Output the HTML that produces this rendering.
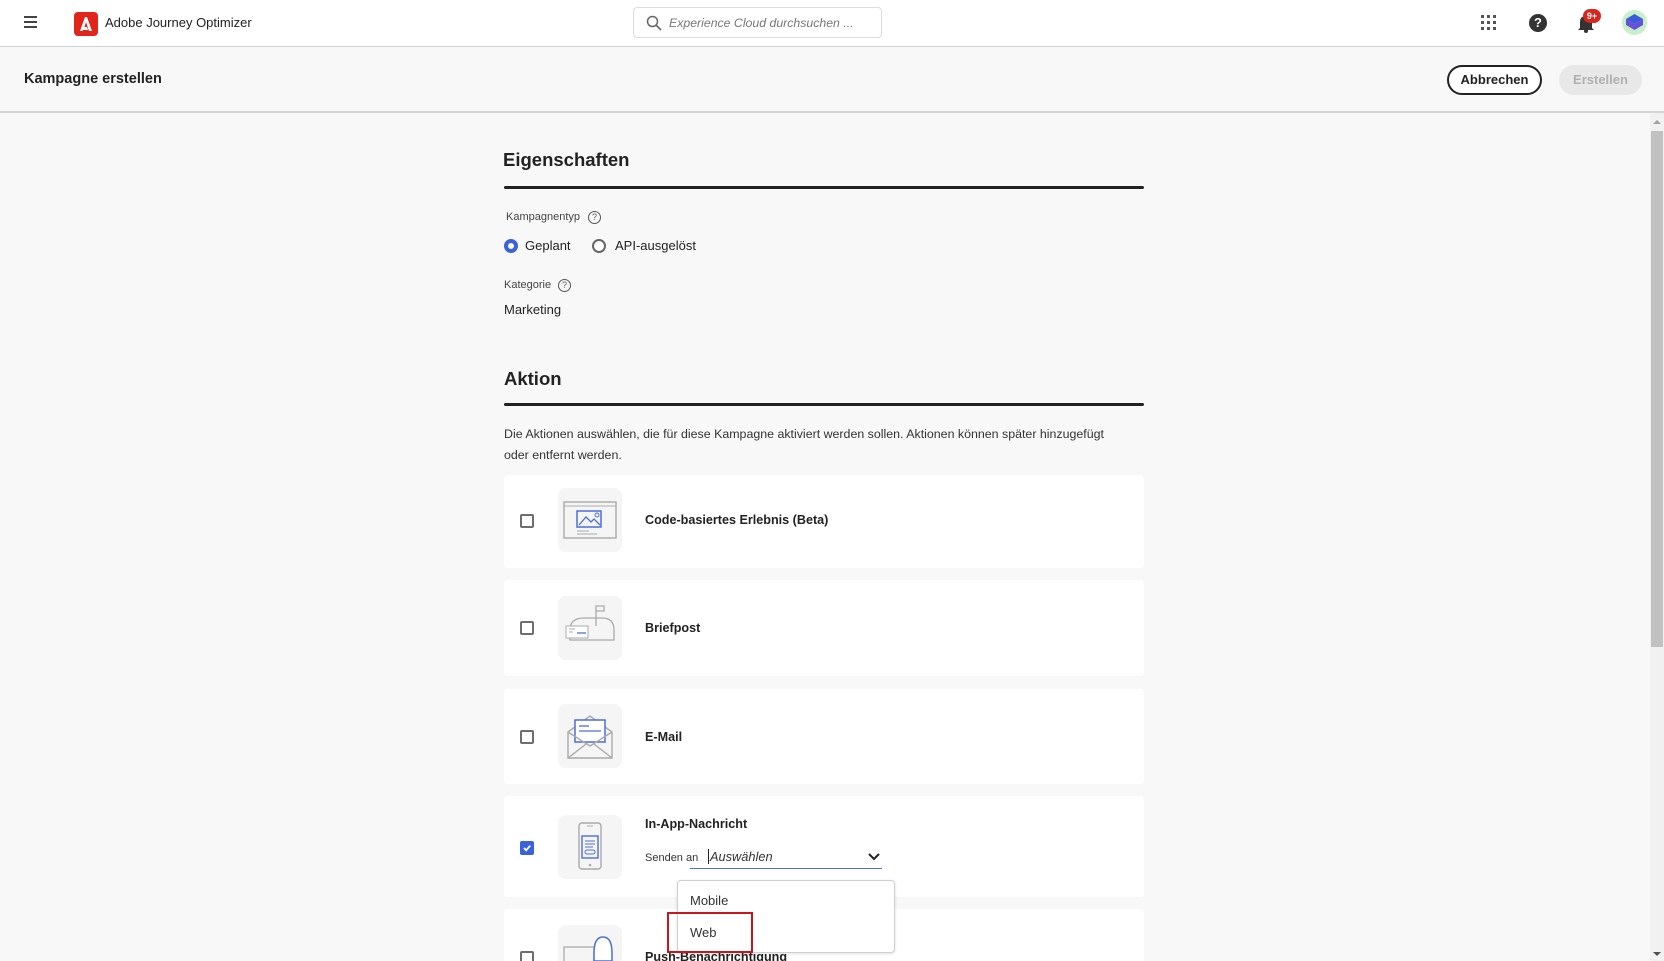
<!DOCTYPE html>
<html><head><meta charset="utf-8"><style>
*{box-sizing:border-box;margin:0;padding:0}
html{width:1664px;height:961px;overflow:hidden}
body{width:1664px;height:961px;overflow:hidden;background:#f8f8f8;font-family:"Liberation Sans",sans-serif;color:#222;position:relative}
.top{position:absolute;left:0;top:0;width:1664px;height:47px;background:#fff;border-bottom:1px solid #d0d0d0}
.sub{position:absolute;left:0;top:48px;width:1664px;height:65px;background:#f8f8f8;border-bottom:2px solid #d5d5d5}
.abs{position:absolute}
.card{position:absolute;left:504px;width:640px;background:#fff;border-radius:4px}
.ib{position:absolute;left:54px;width:64px;height:64px;background:#f5f5f5;border-radius:8px}
.cb{position:absolute;left:16px;width:14px;height:14px;border:2px solid #6e6e6e;border-radius:2px;background:#fff}
.ct{position:absolute;left:141px;font-size:12.6px;font-weight:bold;color:#222}
</style></head><body>
<div class="top">
 <div class="abs" style="left:24px;top:16px;width:13px;height:2px;background:#444;box-shadow:0 5px 0 #444,0 10px 0 #444"></div>
 <div class="abs" style="left:74px;top:12px;width:24px;height:24px;background:#e1251b;border-radius:4px"><svg width="24" height="24" viewBox="0 0 24 24"><path d="M6 19 L11 5 L13 5 L18 19 L15 19 L12 10 L10.5 15 L13 15 L14 18 L9 18 L8.7 19Z" fill="#fff"/></svg></div>
 <div class="abs" style="left:105px;top:15px;font-size:13px;color:#222">Adobe Journey Optimizer</div>
 <div class="abs" style="left:633px;top:7px;width:249px;height:31px;border:1px solid #ddd;border-radius:4px;background:#fff">
  <svg class="abs" style="left:12px;top:7px" width="16" height="16" viewBox="0 0 16 16"><circle cx="6.5" cy="6.5" r="5" fill="none" stroke="#666" stroke-width="1.5"/><path d="M10 10 L15 15" stroke="#666" stroke-width="1.6"/></svg>
  <div class="abs" style="left:35px;top:8px;font-size:12.3px;font-style:italic;color:#777">Experience Cloud durchsuchen ...</div>
 </div>
 <svg class="abs" style="left:1481px;top:15px" width="16" height="16"><g fill="#555"><rect x="0" y="0" width="3" height="3"/><rect x="6" y="0" width="3" height="3"/><rect x="12" y="0" width="3" height="3"/><rect x="0" y="6" width="3" height="3"/><rect x="6" y="6" width="3" height="3"/><rect x="12" y="6" width="3" height="3"/><rect x="0" y="12" width="3" height="3"/><rect x="6" y="12" width="3" height="3"/><rect x="12" y="12" width="3" height="3"/></g></svg>
 <div class="abs" style="left:1529px;top:14px;width:18px;height:18px;border-radius:50%;background:#333;color:#fff;font-size:13px;font-weight:bold;text-align:center;line-height:18px">?</div>
 <svg class="abs" style="left:1577px;top:13px" width="18" height="20" viewBox="0 0 18 20"><path d="M3 15 L3 9 Q3 3 9 3 Q15 3 15 9 L15 15 L17 17 L1 17 Z" fill="#333"/><circle cx="9" cy="18" r="2" fill="#333"/></svg>
 <div class="abs" style="left:1583px;top:9px;width:18px;height:14px;border-radius:7px;background:#d7261d;color:#fff;font-size:9px;font-weight:bold;text-align:center;line-height:14px">9+</div>
 <div class="abs" style="left:1622px;top:10px;width:25px;height:25px;border-radius:50%;background:#c8f0c8"><svg width="25" height="25" viewBox="0 0 25 25"><path d="M12.5 4 L21 9 L12.5 14 L4 9Z" fill="#3b5bdb"/><path d="M4 9 L4 15 L12.5 20 L21 15 L21 9 L12.5 14Z" fill="#6a4fd8"/></svg></div>
</div>
<div class="sub">
 <div class="abs" style="left:24px;top:23px;font-size:14.5px;font-weight:bold">Kampagne erstellen</div>
 <div class="abs" style="left:1447px;top:17px;width:95px;height:30px;border:2px solid #222;border-radius:15px;font-size:13px;font-weight:bold;text-align:center;line-height:26px;background:#fff">Abbrechen</div>
 <div class="abs" style="left:1559px;top:17px;width:83px;height:30px;border-radius:15px;background:#e8e8e8;font-size:13px;font-weight:bold;color:#b0b0b0;text-align:center;line-height:30px">Erstellen</div>
</div>
<div class="abs" style="left:503px;top:149px;font-size:18.5px;font-weight:bold">Eigenschaften</div>
<div class="abs" style="left:504px;top:186px;width:640px;height:3px;background:#222;border-radius:2px"></div>
<div class="abs" style="left:506px;top:211px;font-size:11px;color:#444">Kampagnentyp</div>
<div class="abs" style="left:588px;top:211px;width:13px;height:13px;border:1.3px solid #555;border-radius:50%;font-size:9px;text-align:center;line-height:11px;color:#555">?</div>
<div class="abs" style="left:504px;top:239px;width:14px;height:14px;border-radius:50%;border:4px solid #3b63d9;background:#fff"></div>
<div class="abs" style="left:525px;top:238px;font-size:13px">Geplant</div>
<div class="abs" style="left:592px;top:239px;width:14px;height:14px;border-radius:50%;border:2px solid #666;background:#fff"></div>
<div class="abs" style="left:615px;top:238px;font-size:13px">API-ausgelöst</div>
<div class="abs" style="left:504px;top:279px;font-size:11px;color:#444">Kategorie</div>
<div class="abs" style="left:558px;top:279px;width:13px;height:13px;border:1.3px solid #555;border-radius:50%;font-size:9px;text-align:center;line-height:11px;color:#555">?</div>
<div class="abs" style="left:504px;top:302px;font-size:13px">Marketing</div>
<div class="abs" style="left:504px;top:368px;font-size:18.5px;font-weight:bold">Aktion</div>
<div class="abs" style="left:504px;top:403px;width:640px;height:3px;background:#222;border-radius:2px"></div>
<div class="abs" style="left:504px;top:424px;width:622px;font-size:12.4px;line-height:21px;color:#333">Die Aktionen auswählen, die für diese Kampagne aktiviert werden sollen. Aktionen können später hinzugefügt oder entfernt werden.</div>

<div class="card" style="top:475px;height:93px">
 <div class="cb" style="top:39px"></div>
 <div class="ib" style="top:13px"><svg width="64" height="64" viewBox="0 0 64 64"><rect x="6" y="14" width="52" height="36" fill="none" stroke="#aaa" stroke-width="1.4"/><line x1="6" y1="18" x2="58" y2="18" stroke="#aaa"/><rect x="19" y="23" width="24" height="16" fill="none" stroke="#4a6fdc" stroke-width="1.5"/><path d="M21 37 L28 29 L33 34 L36 31 L42 37" fill="none" stroke="#4a6fdc" stroke-width="1.3"/><circle cx="39" cy="27" r="2" fill="none" stroke="#4a6fdc"/><line x1="19" y1="43" x2="31" y2="43" stroke="#aaa"/><line x1="19" y1="46" x2="39" y2="46" stroke="#aaa"/></svg></div>
 <div class="ct" style="top:38px">Code-basiertes Erlebnis (Beta)</div>
</div>
<div class="card" style="top:580px;height:96px">
 <div class="cb" style="top:41px"></div>
 <div class="ib" style="top:16px"><svg width="64" height="64" viewBox="0 0 64 64"><path d="M12 44 L12 34 Q12 22 26 22 L44 22 Q56 22 56 34 L56 44 Z" fill="none" stroke="#aaa" stroke-width="1.3"/><path d="M38 30 L38 10 L46 10 L46 15 L38 15" fill="none" stroke="#aaa" stroke-width="1.3"/><rect x="8" y="30" width="22" height="12" fill="#fff" stroke="#aaa"/><line x1="11" y1="33" x2="17" y2="33" stroke="#aaa"/><line x1="11" y1="36" x2="15" y2="36" stroke="#aaa"/><line x1="19" y1="37" x2="28" y2="37" stroke="#4a6fdc" stroke-width="1.3"/></svg></div>
 <div class="ct" style="top:41px">Briefpost</div>
</div>
<div class="card" style="top:689px;height:95px">
 <div class="cb" style="top:41px"></div>
 <div class="ib" style="top:15px"><svg width="64" height="64" viewBox="0 0 64 64"><path d="M10 28 L32 12 L54 28 L54 54 L10 54 Z" fill="none" stroke="#aaa" stroke-width="1.4"/><rect x="17" y="16" width="30" height="22" fill="#fff" stroke="#4a6fdc" stroke-width="1.5"/><line x1="21" y1="22" x2="31" y2="22" stroke="#4a6fdc" stroke-width="1.3"/><line x1="21" y1="27" x2="43" y2="27" stroke="#4a6fdc" stroke-width="1.3"/><path d="M10 28 L32 42 L54 28 M10 54 L28 40 M54 54 L36 40" fill="none" stroke="#aaa" stroke-width="1.4"/></svg></div>
 <div class="ct" style="top:41px">E-Mail</div>
</div>
<div class="card" style="top:796px;height:101px">
 <div class="cb" style="top:45px;background:#3b63d9;border-color:#3b63d9"><svg width="10" height="10" viewBox="0 0 10 10" style="position:absolute;left:0;top:0"><path d="M2 5 L4.2 7.3 L8.2 2.7" fill="none" stroke="#fff" stroke-width="1.8"/></svg></div>
 <div class="ib" style="top:19px"><svg width="64" height="64" viewBox="0 0 64 64"><rect x="21" y="8" width="22" height="46" rx="3" fill="none" stroke="#aaa" stroke-width="1.4"/><line x1="29" y1="11" x2="35" y2="11" stroke="#aaa"/><circle cx="32" cy="50" r="1.3" fill="#aaa"/><rect x="24" y="21" width="16" height="22" fill="none" stroke="#4a6fdc" stroke-width="1.4"/><line x1="27" y1="26" x2="37" y2="26" stroke="#4a6fdc"/><line x1="27" y1="29" x2="37" y2="29" stroke="#4a6fdc"/><line x1="27" y1="32" x2="35" y2="32" stroke="#4a6fdc"/><rect x="27" y="35" width="10" height="4" rx="2" fill="none" stroke="#4a6fdc"/></svg></div>
 <div class="ct" style="top:21px">In-App-Nachricht</div>
 <div class="abs" style="left:141px;top:56px;font-size:11px;color:#333">Senden an</div>
 <div class="abs" style="left:186px;top:52px;width:192px;height:21px;border-bottom:1.5px solid #4a6fdc">
  <div class="abs" style="left:18px;top:1px;font-size:12.8px;font-style:italic;color:#333;border-left:1px solid #222;padding-left:1px">Auswählen</div>
  <svg class="abs" style="left:178px;top:5px" width="12" height="8"><path d="M1 1 L6 6 L11 1" fill="none" stroke="#222" stroke-width="2"/></svg>
 </div>
</div>
<div class="card" style="top:909px;height:52px;border-radius:4px 4px 0 0">
 <div class="cb" style="top:42px"></div>
 <div class="ib" style="top:16px;height:36px;border-radius:8px 8px 0 0;overflow:hidden"><svg width="64" height="64" viewBox="0 0 64 64"><rect x="6" y="22" width="30" height="20" fill="none" stroke="#aaa" stroke-width="1.3"/><path d="M36 28 Q36 12 45 12 Q54 12 54 28 L54 36 L36 36Z" fill="#fff" stroke="#4a6fdc" stroke-width="1.5"/></svg></div>
 <div class="ct" style="top:41px">Push-Benachrichtigung</div>
</div>

<div class="abs" style="left:677px;top:880px;width:218px;height:73px;background:#fff;border:1px solid #cfcfcf;border-radius:4px;box-shadow:0 1px 3px rgba(0,0,0,.12)">
 <div class="abs" style="left:12px;top:12px;font-size:13px;color:#333">Mobile</div>
 <div class="abs" style="left:12px;top:44px;font-size:13px;color:#333">Web</div>
</div>
<div class="abs" style="left:667px;top:912px;width:86px;height:41px;border:2px solid #c8161d"></div>

<div class="abs" style="left:1650px;top:113px;width:14px;height:848px;background:#f1f1f1"></div>
<div class="abs" style="left:1651px;top:131px;width:12px;height:516px;background:#c1c1c1"></div>
<svg class="abs" style="left:1652px;top:118px" width="10" height="8"><path d="M1 6 L5 2 L9 6Z" fill="#a0a0a0"/></svg>
<svg class="abs" style="left:1652px;top:950px" width="10" height="8"><path d="M1 2 L5 6 L9 2Z" fill="#505050"/></svg>
</body></html>
